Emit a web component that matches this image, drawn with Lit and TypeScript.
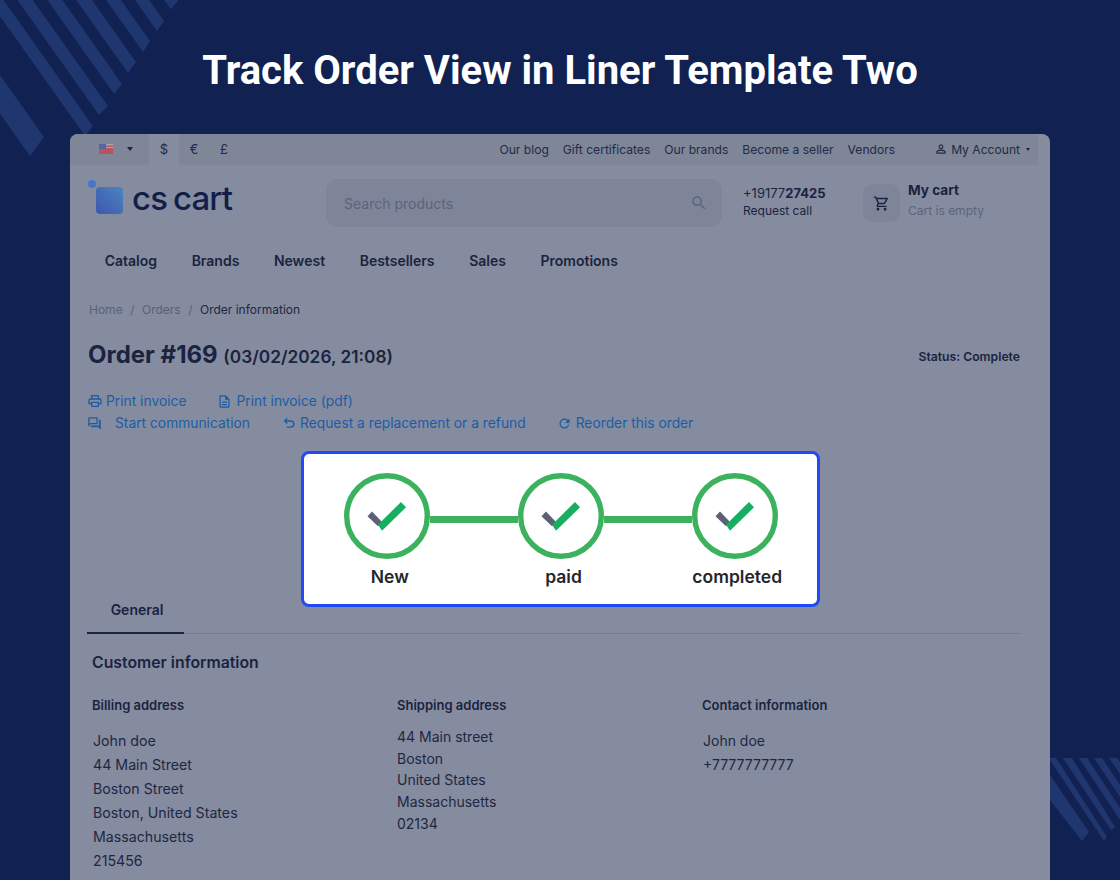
import { LitElement, html, css, svg } from "lit";
import { customElement } from "lit/decorators.js";

const ICONS: Record<string, string> = {
  print: "M19 8h-1V3H6v5H5c-1.66 0-3 1.34-3 3v6h4v4h12v-4h4v-6c0-1.66-1.34-3-3-3zM8 5h8v3H8V5zm8 12v2H8v-4h8v2zm2-2v-2H6v2H4v-4c0-.55.45-1 1-1h14c.55 0 1 .45 1 1v4h-2z",
  doc: "M8 16h8v2H8zm0-4h8v2H8zm6-10H6c-1.1 0-2 .9-2 2v16c0 1.1.89 2 1.99 2H18c1.1 0 2-.9 2-2V8l-6-6zm4 18H6V4h7v5h5v11z",
  chat: "M15 4v7H5.17L4 12.17V4h11m1-2H3c-.55 0-1 .45-1 1v14l4-4h10c.55 0 1-.45 1-1V3c0-.55-.45-1-1-1zm5 4h-2v9H6v2c0 .55.45 1 1 1h11l4 4V7c0-.55-.45-1-1-1z",
  refresh: "M17.65 6.35C16.2 4.9 14.21 4 12 4c-4.42 0-7.99 3.58-7.99 8s3.57 8 7.99 8c3.73 0 6.84-2.55 7.73-6h-2.08c-.82 2.33-3.04 4-5.65 4-3.31 0-6-2.69-6-6s2.69-6 6-6c1.66 0 3.14.69 4.22 1.78L13 11h7V4l-2.35 2.35z",
  person: "M12 5.9c1.16 0 2.1.94 2.1 2.1s-.94 2.1-2.1 2.1S9.9 9.16 9.9 8s.94-2.1 2.1-2.1m0 9c2.97 0 6.1 1.46 6.1 2.1v1.1H5.9V17c0-.64 3.13-2.1 6.1-2.1M12 4C9.79 4 8 5.79 8 8s1.79 4 4 4 4-1.79 4-4-1.79-4-4-4zm0 9c-2.67 0-8 1.34-8 4v3h16v-3c0-2.66-5.33-4-8-4z",
  cart: "M15.55 13c.75 0 1.41-.41 1.75-1.03l3.58-6.49c.37-.66-.11-1.48-.87-1.48H5.21l-.94-2H1v2h2l3.6 7.59-1.35 2.44C4.52 15.37 5.48 17 7 17h12v-2H7l1.1-2h7.45zM6.16 6h12.15l-2.76 5H8.53L6.16 6zM7 18c-1.1 0-1.99.9-1.99 2S5.9 22 7 22s2-.9 2-2-.9-2-2-2zm10 0c-1.1 0-1.99.9-1.99 2s.89 2 1.99 2 2-.9 2-2-.9-2-2-2z",
  search: "M15.5 14h-.79l-.28-.27C15.41 12.59 16 11.11 16 9.5 16 5.91 13.09 3 9.5 3S3 5.91 3 9.5 5.91 16 9.5 16c1.61 0 3.09-.59 4.23-1.57l.27.28v.79l5 4.99L20.49 19l-4.99-5zm-6 0C7.01 14 5 11.99 5 9.5S7.01 5 9.5 5 14 7.01 14 9.5 11.99 14 9.5 14z",
};

const icon = (name: string, size: number) => html`<svg class="ico" width=${size} height=${size} viewBox="0 0 24 24" fill="currentColor"><path d=${ICONS[name]}></path></svg>`;
const undoIcon = (size: number) => html`<svg class="ico" width=${size} height=${size} viewBox="0 0 24 24" fill="none" stroke="currentColor" stroke-width="2.4"><path d="M9 4 4.5 8.500 9 13M4.500 8.500H15a5.200 5.200 0 0 1 0 10.500H8"></path></svg>`;

// Stripe tips (top, bottom) for the top-left decor, extended up and left off the canvas.
const tips: number[][] = [
  [178.500, 0, 171, 9.500], [164, 21, 157, 31], [150, 41, 143, 52], [136, 62, 128, 73],
  [122, 84, 114, 94], [108, 106, 99, 115], [93, 126, 85, 136], [44, 137, 30, 156],
];
const stripe = (t: number[]) => {
  const dx = -0.71 * 220, dy = -220;
  return svg`<polygon points="${t[0]},${t[1]} ${t[2]},${t[3]} ${t[2] + dx},${t[3] + dy} ${t[0] + dx},${t[1] + dy}"></polygon>`;
};

const check = svg`
  <polygon fill="#5c5f75" points="-19.500,0.300 -15,-4.500 -5,6 -9,10.300"></polygon>
  <polygon fill="#17ae60" points="-9,8.700 14,-14 19,-8.700 -5,14.700"></polygon>`;

@customElement("app-root")
export class AppRoot extends LitElement {
  static styles = css`
    :host { display: block; position: relative; width: 1120px; height: 880px; overflow: hidden; background: #102152; font-family: Inter, sans-serif; color: #1a2340; }
    .decor { position: absolute; left: 0; top: 0; fill: #20366f; pointer-events: none; }
    .title { margin: 0; height: 134px; box-sizing: border-box; padding-top: 47px; text-align: center; font: 700 40px/48px Roboto, sans-serif; color: #fff; position: relative; }
    .card { position: relative; margin: 0 70px; height: 746px; overflow: hidden; background: #858c9f; border-radius: 8px 8px 0 0; }
    .ico { display: block; flex: none; }
    .topbar { display: flex; align-items: center; height: 31px; box-sizing: border-box; padding-bottom: 1px; margin-right: 12px; background: #7f8698; font-size: 13px; color: #222b45; }
    .flag { display: flex; align-items: center; width: 79px; height: 100%; box-sizing: border-box; padding-left: 29px; }
    .caret { width: 0; height: 0; border: 2.500px solid transparent; border-top: 3.500px solid #1a2340; border-bottom: 0; }
    .flag .caret { margin-left: 14px; border-width: 4px 3.500px 0; }
    .cur { width: 30px; height: 31px; display: flex; align-items: center; justify-content: center; }
    .cur.on { background: #858c9f; }
    .toplinks { margin-left: auto; display: flex; align-items: center; gap: 14px; padding-right: 8px; font-size: 12.100px; }
    .account { display: flex; align-items: center; gap: 3.500px; margin-left: 24.500px; }
    .account .caret { margin-left: 2.500px; }
    .head { display: flex; align-items: center; height: 76px; box-sizing: border-box; padding-left: 18px; }
    .logo { position: relative; display: flex; align-items: center; width: 238px; height: 40px; box-sizing: border-box; padding-left: 8px; margin-bottom: 12px; }
    .logo-dot { position: absolute; left: 0; top: 3px; width: 8px; height: 8px; border-radius: 50%; background: #4a76c9; }
    .logo-box { width: 27px; height: 27px; margin-top: 6px; border-radius: 4px; background: linear-gradient(45deg, #3e56ad, #4a84c2); }
    .logo-text { margin-left: 9px; margin-top: 2px; font: 500 33px/40px "Inter", sans-serif; letter-spacing: -0.900px; color: #101e48; word-spacing: -2px; }
    .search { display: flex; align-items: center; justify-content: space-between; width: 396px; height: 48px; box-sizing: border-box; padding: 0 14px 0 18px; background: #7e8599; border-radius: 12px; font-size: 14px; color: #5b647d; }
    .phone { margin-left: 21px; margin-bottom: 2px; width: 120px; font-size: 12px; line-height: 18px; color: #1a2340; }
    .phone .num { font-size: 13px; }
    .phone b { font-weight: 700; }
    .cartbox { width: 37px; height: 38px; display: flex; align-items: center; justify-content: center; border-radius: 10px; background: #7e8599; }
    .cartinfo { margin-left: 8px; margin-bottom: 6px; }
    .cartinfo b { display: block; font-size: 13.600px; line-height: 20px; font-weight: 700; }
    .cartinfo span { display: block; margin-top: 2px; font-size: 12px; line-height: 18px; color: #5b647d; }
    .nav { display: flex; gap: 34.600px; height: 40px; margin-top: -1px; align-items: center; padding-left: 34.700px; font-size: 14px; font-weight: 600; }
    .main { padding: 0 29px 0 18px; }
    .crumbs { display: flex; gap: 7.500px; align-items: center; margin-top: 19px; padding-left: 1px; height: 20px; font-size: 12px; color: #586179; }
    .crumbs .cur-c { color: #1e2742; }
    .order { display: flex; align-items: center; justify-content: space-between; margin-top: 21px; height: 32px; }
    .order h2 { margin: 0; font-size: 24px; line-height: 32px; font-weight: 700; color: #1a2340; }
    .order h2 small { font-size: 17.300px; font-weight: 600; }
    .status { font-size: 12.200px; font-weight: 600; margin: 0 1px 0 0; }
    .actions { margin-top: 18px; font-size: 13.800px; color: #1c5ca6; }
    .arow { display: flex; height: 22px; align-items: center; }
    .arow a { display: flex; align-items: center; }
    .a-print { gap: 3px; margin-left: -1px; }
    .a-doc { gap: 4px; margin-left: 31px; }
    .a-chat { gap: 13px; margin-left: -1px; }
    .a-undo { gap: 4px; margin-left: 32px; }
    .a-redo { gap: 4px; margin-left: 31px; }
    .tabs { margin-top: 157px; height: 43px; margin-left: -1px; border-bottom: 1px solid #767d92; box-sizing: border-box; }
    .tab { display: flex; align-items: center; justify-content: center; width: 97px; height: 43px; box-sizing: border-box; border-bottom: 2px solid #1a2340; font-size: 14px; font-weight: 600; padding: 0 0 4px 3px; }
    .cust { padding-left: 4px; }
    .cust h3 { margin: 18px 0 0; font-size: 15.800px; line-height: 22px; font-weight: 600; }
    .cols { display: grid; grid-template-columns: 305px 305px 1fr; margin-top: 21px; }
    .cols h4 { margin: 0; font-size: 13px; line-height: 20px; font-weight: 600; }
    .lines { margin-top: 14px; padding-left: 1px; font-size: 14px; line-height: 24px; color: #1e2742; }
    .lines.wide { font-size: 14.200px; }
    .lines.tight { margin-top: 11px; padding-left: 0; line-height: 21.700px; }
    .hl { position: absolute; left: 231px; top: 317px; width: 519px; height: 156px; box-sizing: border-box; border: 3px solid #2149f5; border-radius: 8px; background: #fff; padding: 19px 0 0 40px; }
    .steps { display: flex; align-items: center; }
    .circle { width: 86px; height: 86px; flex: none; }
    .circle circle { fill: #fff; stroke: #3cb25f; stroke-width: 5.400; }
    .link { width: 88px; height: 7px; margin-top: 7px; background: #3cb25f; }
    .labels { display: grid; grid-template-columns: repeat(3, 173.700px); margin: 6px 0 0 -41px; font-size: 17.500px; line-height: 24px; font-weight: 600; color: #24262c; text-align: center; }
  `;

  render() {
    const circle = html`<svg class="circle" viewBox="-43 -43 86 86"><circle r="40.300"></circle>${check}</svg>`;
    return html`
      <svg class="decor" width="1120" height="880" viewBox="0 0 1120 880">
        ${tips.map(stripe)}
        <polygon points="1050,758 1056,758 1107,837 1104,841 1050,760"></polygon>
        <polygon points="1050,775 1089,832 1082,841 1050,800"></polygon>
        <polygon points="1063,758 1072,758 1115,827 1111,830"></polygon>
        <polygon points="1079,758 1087,758 1120,808 1120,820"></polygon>
        <polygon points="1094,758 1102,758 1120,785 1120,797"></polygon>
        <polygon points="1109,758 1117,758 1120,762 1120,774"></polygon>
      </svg>
      <h1 class="title">Track Order View in Liner Template Two</h1>
      <div class="card">
        <div class="topbar">
          <div class="flag">
            <svg width="14" height="10" viewBox="0 0 14 10"><rect width="14" height="10" fill="#b5565f"></rect><rect y="3" width="14" height="1" fill="#a9a7b4"></rect><rect width="7" height="5" fill="#5367a5"></rect><rect x="7" width="7" height="1.500" fill="#a9a7b4"></rect></svg>
            <span class="caret"></span>
          </div>
          <span class="cur on">$</span><span class="cur">€</span><span class="cur">£</span>
          <div class="toplinks">
            <span>Our blog</span><span>Gift certificates</span><span>Our brands</span><span>Become a seller</span><span>Vendors</span>
            <span class="account">${icon("person", 14)}<span>My Account</span><span class="caret"></span></span>
          </div>
        </div>
        <div class="head">
          <div class="logo"><span class="logo-dot"></span><span class="logo-box"></span><span class="logo-text">cs cart</span></div>
          <div class="search"><span>Search products</span>${icon("search", 18)}</div>
          <div class="phone"><div class="num">+19177<b>27425</b></div><div>Request call</div></div>
          <div class="cartbox">${icon("cart", 17)}</div>
          <div class="cartinfo"><b>My cart</b><span>Cart is empty</span></div>
        </div>
        <nav class="nav"><span>Catalog</span><span>Brands</span><span>Newest</span><span>Bestsellers</span><span>Sales</span><span>Promotions</span></nav>
        <div class="main">
          <div class="crumbs"><span>Home</span><span>/</span><span>Orders</span><span>/</span><span class="cur-c">Order information</span></div>
          <div class="order"><h2>Order #169 <small>(03/02/2026, 21:08)</small></h2><span class="status">Status: Complete</span></div>
          <div class="actions">
            <div class="arow">
              <a class="a-print">${icon("print", 16)}<span>Print invoice</span></a>
              <a class="a-doc">${icon("doc", 15)}<span>Print invoice (pdf)</span></a>
            </div>
            <div class="arow">
              <a class="a-chat">${icon("chat", 15)}<span>Start communication</span></a>
              <a class="a-undo">${undoIcon(14)}<span>Request a replacement or a refund</span></a>
              <a class="a-redo">${icon("refresh", 15)}<span>Reorder this order</span></a>
            </div>
          </div>
          <div class="tabs"><div class="tab">General</div></div>
          <div class="cust">
            <h3>Customer information</h3>
            <div class="cols">
              <div><h4>Billing address</h4><div class="lines wide">John doe<br>44 Main Street<br>Boston Street<br>Boston, United States<br>Massachusetts<br>215456</div></div>
              <div><h4>Shipping address</h4><div class="lines tight">44 Main street<br>Boston<br>United States<br>Massachusetts<br>02134</div></div>
              <div><h4>Contact information</h4><div class="lines">John doe<br>+7777777777</div></div>
            </div>
          </div>
        </div>
        <div class="hl">
          <div class="steps">${circle}<span class="link"></span>${circle}<span class="link"></span>${circle}</div>
          <div class="labels"><span>New</span><span>paid</span><span>completed</span></div>
        </div>
      </div>
    `;
  }
}
